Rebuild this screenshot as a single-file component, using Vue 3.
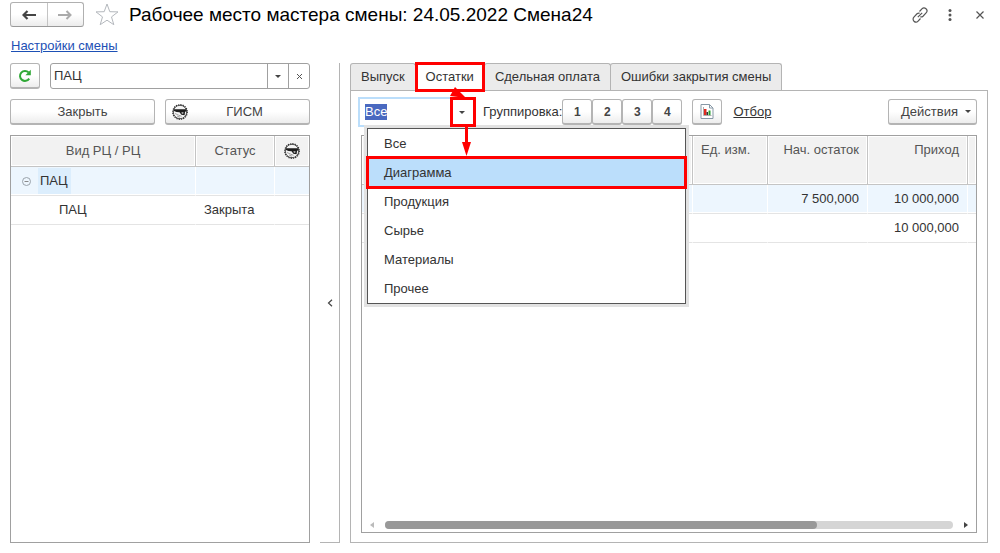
<script setup>
import { ref, onMounted } from 'vue'

const workCenter = ref('ПАЦ')
const kind = ref('Все')
const kindInput = ref(null)
const kinds = ['Все', 'Диаграмма', 'Продукция', 'Сырье', 'Материалы', 'Прочее']
const tabs = ['Выпуск', 'Остатки', 'Сдельная оплата', 'Ошибки закрытия смены']
const activeTab = ref('Остатки')
const highlighted = ref('Диаграмма')

onMounted(() => {
  kindInput.value.focus()
  kindInput.value.select()
})
</script>

<template>
  <div class="page">
    <svg class="defs" width="0" height="0" aria-hidden="true">
      <symbol id="gism" viewBox="0 0 16 16">
        <circle cx="8" cy="8" r="6.7" fill="#f4f4f4" stroke="#555" stroke-width="1" />
        <circle cx="8" cy="8" r="7.3" fill="none" stroke="#333" stroke-width="1.2" stroke-dasharray="1.3 1" />
        <path d="M1.800 5.200h12.600v1.900l-1.400.9-.4 3.200-3.200-.4-1.900-2.500-3-.3L2 6.900z" fill="#1c1c1c" />
        <path d="M9.300 8.400l2.200-.2-.3 1.500-1.300-.2z" fill="#eee" />
        <path d="M3 9.500l3.500 1.600 3 1.200M5 12l3 1.200" fill="none" stroke="#999" stroke-width=".9" />
      </symbol>
    </svg>

    <header class="titlebar">
      <div class="nav">
        <button type="button" aria-label="Назад">
          <svg width="14" height="10" viewBox="0 0 14 10"><path d="M5.500 1L1.500 5l4 4M2 5h12" fill="none" stroke="#444" stroke-width="2.200" /></svg>
        </button>
        <button type="button" aria-label="Вперед">
          <svg width="14" height="10" viewBox="0 0 14 10"><path d="M8.500 1l4 4-4 4M12 5H0" fill="none" stroke="#aaa" stroke-width="2" /></svg>
        </button>
      </div>
      <button class="plain star" type="button" aria-label="В избранное">
        <svg width="24" height="23" viewBox="0 0 24 23"><path d="M12 1l2.800 7.700 8.200.2-6.500 5 2.300 7.800-6.800-4.500-6.800 4.500 2.300-7.800L1 8.900l8.200-.2z" fill="#fff" stroke="#b4b8bd" /></svg>
      </button>
      <h1>Рабочее место мастера смены: 24.05.2022 Смена24</h1>
      <div class="tools">
        <button class="plain" type="button" aria-label="Ссылка">
          <svg width="16" height="16" viewBox="0 0 16 16" fill="none" stroke="#555" stroke-width="1.200"><path d="M7.500 4.500l2.400-2.600a2.800 2.800 0 0 1 4.200 4L11 9.200a2.800 2.800 0 0 1-2.700.6M8.500 11.500l-2.400 2.600a2.800 2.800 0 0 1-4.200-4L5 6.800a2.800 2.800 0 0 1 2.700-.6M5.800 10.200l4.400-4.400" /></svg>
        </button>
        <button class="plain" type="button" aria-label="Меню">
          <svg width="16" height="16" viewBox="0 0 16 16" fill="#555"><circle cx="8" cy="3.500" r="1.500" /><circle cx="8" cy="8" r="1.500" /><circle cx="8" cy="12.500" r="1.500" /></svg>
        </button>
        <button class="plain" type="button" aria-label="Закрыть окно">
          <svg width="16" height="16" viewBox="0 0 16 16"><path d="M4.500 4.500l7 7M11.500 4.500l-7 7" stroke="#555" stroke-width="1.200" /></svg>
        </button>
      </div>
    </header>

    <nav class="links"><a href="#settings">Настройки смены</a></nav>

    <main class="body">
      <section class="left">
        <div class="row">
          <button class="btn square" type="button" aria-label="Обновить">
            <svg width="14" height="14" viewBox="0 0 14 14"><path d="M11.200 9.600A5 5 0 1 1 10.600 3.400" fill="none" stroke="#2fa836" stroke-width="2" /><path d="M12.800 .8v5.400H7.400z" fill="#2fa836" /></svg>
          </button>
          <div class="field">
            <input v-model="workCenter" type="text" aria-label="Рабочий центр">
            <button type="button" aria-label="Выбрать"><span class="caret"></span></button>
            <button type="button" aria-label="Очистить">
              <svg width="7" height="7" viewBox="0 0 7 7"><path d="M1 1l5 5M6 1L1 6" stroke="#555" /></svg>
            </button>
          </div>
        </div>
        <div class="row">
          <button class="btn half" type="button">Закрыть</button>
          <button class="btn half" type="button">
            <svg class="gism" width="16" height="16"><use href="#gism" /></svg><span class="label">ГИСМ</span>
          </button>
        </div>
        <div class="grid">
          <table class="centers">
            <thead>
              <tr>
                <th scope="col">Вид РЦ / РЦ</th>
                <th class="status" scope="col">Статус</th>
                <th class="mark" scope="col" aria-label="ГИСМ"><svg width="16" height="16"><use href="#gism" /></svg></th>
              </tr>
            </thead>
            <tbody>
              <tr class="selected">
                <td>
                  <div class="group">
                    <svg width="9" height="9" viewBox="0 0 9 9"><circle cx="4.500" cy="4.500" r="4" fill="none" stroke="#9aa3aa" /><path d="M2.500 4.500h4" stroke="#888" /></svg>
                    <span>ПАЦ</span>
                  </div>
                </td>
                <td></td>
                <td></td>
              </tr>
              <tr>
                <td class="child">ПАЦ</td>
                <td>Закрыта</td>
                <td></td>
              </tr>
            </tbody>
          </table>
        </div>
      </section>

      <div class="splitter">
        <button class="plain" type="button" aria-label="Свернуть">
          <svg width="6" height="8" viewBox="0 0 6 8"><path d="M5 .8L1.500 4 5 7.200" fill="none" stroke="#444" stroke-width="1.200" /></svg>
        </button>
      </div>

      <section class="right">
        <div class="tabs" role="tablist">
          <button
            v-for="tab in tabs"
            :key="tab"
            type="button"
            role="tab"
            :aria-selected="tab === activeTab"
            :class="{ active: tab === activeTab }"
            @click="activeTab = tab"
          >{{ tab }}</button>
        </div>

        <div class="panel">
          <div class="toolbar">
            <div class="combo">
              <input ref="kindInput" v-model="kind" type="text" role="combobox" aria-expanded="true" aria-controls="kinds" aria-label="Вид остатков">
              <button type="button" aria-label="Открыть список"><span class="caret"></span></button>
              <ul id="kinds" class="options" role="listbox">
                <li
                  v-for="item in kinds"
                  :key="item"
                  role="option"
                  :aria-selected="item === highlighted"
                  :class="{ current: item === highlighted }"
                  @mouseenter="highlighted = item"
                >{{ item }}</li>
              </ul>
              <svg class="arrows" width="30" height="72" viewBox="0 0 30 72" fill="#f00" aria-hidden="true">
                <path d="M4 11L9 2l11 11z" />
                <path d="M19 40h3v17h3l-4.500 14L16 57h3z" />
              </svg>
            </div>
            <span class="caption">Группировка:</span>
            <div class="levels">
              <button v-for="n in 4" :key="n" class="btn" type="button">{{ n }}</button>
            </div>
            <button class="btn square chart" type="button" aria-label="Отчет">
              <svg width="14" height="15" viewBox="0 0 14 15"><path d="M1 .5h8.500l3.500 3.500v10.500H1z" fill="#fff" stroke="#8798a6" /><path d="M9.500 .5v3.500H13" fill="none" stroke="#8798a6" /><path d="M3.500 3v8.500h8" fill="none" stroke="#999" stroke-width=".8" /><path d="M4 5h2.500v6H4z" fill="#e02b20" /><path d="M6.500 8H8v3H6.500z" fill="#333" /><path d="M8.500 6.500h2V11h-2z" fill="#26a12e" /></svg>
            </button>
            <a class="filter" href="#filter">Отбор</a>
            <button class="btn actions" type="button">Действия<span class="caret"></span></button>
          </div>

          <div class="grid stock">
            <table class="stocks">
              <thead>
                <tr>
                  <th scope="col"></th>
                  <th class="unit" scope="col">Ед. изм.</th>
                  <th class="num" scope="col">Нач. остаток</th>
                  <th class="num" scope="col">Приход</th>
                  <th class="rest" scope="col"></th>
                </tr>
              </thead>
              <tbody>
                <tr class="selected">
                  <td></td>
                  <td></td>
                  <td class="num">7 500,000</td>
                  <td class="num">10 000,000</td>
                  <td></td>
                </tr>
                <tr>
                  <td></td>
                  <td></td>
                  <td></td>
                  <td class="num">10 000,000</td>
                  <td></td>
                </tr>
              </tbody>
            </table>
            <div class="scroll">
              <svg width="4" height="6" viewBox="0 0 4 6"><path d="M4 0v6L0 3z" fill="#bbb" /></svg>
              <div class="track"><div class="thumb"></div></div>
              <svg width="4" height="6" viewBox="0 0 4 6"><path d="M0 0v6l4-3z" fill="#444" /></svg>
            </div>
          </div>
        </div>
      </section>
    </main>
  </div>
</template>

<style>
body {
  background: #fff;
}
</style>

<style scoped>
* {
  box-sizing: border-box;
}
.page {
  display: flex;
  flex-direction: column;
  min-height: 100vh;
  padding: 2px 12px 10px 10px;
  font: 13px/16px "Liberation Sans", Arial, sans-serif;
  color: #333;
}
.defs {
  position: absolute;
}
button,
input {
  margin: 0;
  font: inherit;
  color: #444;
}
svg {
  display: block;
}
button {
  display: flex;
  align-items: center;
  justify-content: center;
  padding: 0;
}
.plain {
  border: 0;
  background: none;
}
.caret {
  border: 3px solid transparent;
  border-top-color: #444;
  border-bottom: 0;
}

.titlebar {
  display: flex;
  align-items: center;
  height: 25px;
}
.nav {
  display: flex;
  width: 74px;
  height: 25px;
  border: 1px solid #b0b0b0;
  border-bottom-color: #999;
  border-radius: 3px;
  background: linear-gradient(#fff 50%, #ececec);
}
.nav button {
  flex: 1;
  border: 0;
  background: none;
}
.nav button + button {
  border-left: 1px solid #c4c4c4;
}
.star {
  margin: 0 10px 0 11px;
}
h1 {
  margin: 0;
  font-size: 19px;
  line-height: 24px;
  font-weight: 400;
  color: #000;
}
.tools {
  display: flex;
  gap: 14px;
  margin-left: auto;
}

.links {
  margin: 11px 0 9px;
  padding-left: 1px;
}
.links a {
  color: #1d50b5;
}

.body {
  display: flex;
  flex: 1;
}
.left {
  display: flex;
  flex-direction: column;
  flex: 0 0 300px;
  gap: 10px;
}
.row {
  display: flex;
  gap: 10px;
}
.btn {
  height: 26px;
  border: 1px solid #b4b4b4;
  border-bottom: 2px solid #b4b4b4;
  border-radius: 3px;
  background: linear-gradient(#fff 50%, #ededed);
}
.square {
  width: 30px;
}
.half {
  flex: 1;
  position: relative;
}
.label {
  padding-left: 14px;
}
.gism {
  position: absolute;
  left: 6px;
  top: 4px;
}
.field {
  display: flex;
  flex: 1;
  height: 26px;
  border: 1px solid #a0a0a0;
  border-radius: 3px;
}
input {
  flex: 1;
  width: 0;
  min-width: 0;
  padding: 0 3px;
  border: 0;
  outline: 0;
  background: none;
  color: #333;
}
.field button {
  width: 21px;
  border: 0;
  border-left: 1px solid #a0a0a0;
  background: none;
}

.grid {
  flex: 1;
  border: 1px solid #a0a0a0;
}
table {
  width: 100%;
  table-layout: fixed;
  border-collapse: separate;
  border-spacing: 0;
}
th {
  height: 31px;
  padding: 0;
  border-right: 1px solid #c4c4c4;
  border-bottom: 1px solid #c4c4c4;
  background: #f2f2f2;
  box-shadow: inset 0 0 0 1px #fff;
  font-weight: 400;
  color: #555;
}
td {
  height: 29px;
  padding: 0 8px;
  border-right: 1px solid #fff;
  border-bottom: 1px solid #e4e4e4;
}
.selected td {
  background: #edf6fe;
  box-shadow: inset 0 -1px #fff;
}
th:last-child,
td:last-child {
  border-right: 0;
}
.status {
  width: 79px;
}
.mark {
  width: 34px;
}
.mark svg {
  margin: 0 auto;
}
.group {
  display: flex;
  align-items: center;
  gap: 7px;
  padding-left: 3px;
}
.group span {
  padding: 5px 3px 5px 2px;
  background: #dceefd;
}
.centers .child {
  padding-left: 48px;
}

.splitter {
  display: flex;
  align-items: center;
  justify-content: center;
  flex: 0 0 20px;
  margin: 0 10px;
  border-right: 1px solid #b4b4b4;
  border-bottom: 1px solid #b4b4b4;
}

.right {
  display: flex;
  flex-direction: column;
  flex: 1;
  min-width: 0;
}
.tabs {
  display: flex;
}
.tabs button {
  height: 27px;
  padding: 0 10px;
  border: 1px solid #b4b4b4;
  border-bottom: 0;
  border-radius: 3px 3px 0 0;
  background: #ebebeb;
  color: #333;
}
.tabs button + button {
  margin-left: -1px;
}
.tabs .active {
  position: relative;
  z-index: 1;
  background: #fff;
}
.tabs .active::after {
  content: "";
  position: absolute;
  inset: -2px -1px -2px -1px;
  border: 3px solid #f00;
}
.panel {
  display: flex;
  flex-direction: column;
  flex: 1;
  padding: 8px 10px 9px;
  border: 1px solid #b4b4b4;
}
.toolbar {
  display: flex;
  align-items: center;
  height: 26px;
  margin-bottom: 10px;
}
.combo {
  position: relative;
  display: flex;
  flex: 0 0 118px;
  height: 30px;
  margin-left: -3px;
  border: 2px solid #bbdefb;
}
.combo input {
  padding: 0 5px;
}
.combo input::selection {
  background: #4a69c0;
  color: #fff;
}
.combo button {
  position: relative;
  z-index: 3;
  width: 24px;
  border: 0;
  background: none;
}
.combo button::after {
  content: "";
  position: absolute;
  inset: -2px -2px -2px 0;
  border: 3px solid #f00;
}
.options {
  position: absolute;
  z-index: 2;
  top: 29px;
  left: 7px;
  width: 319px;
  margin: 0;
  padding: 0;
  list-style: none;
  border: 1px solid #555;
  background: #fff;
  box-shadow: 0 0 0 3px #e2e2e2;
}
.options li {
  position: relative;
  height: 29px;
  padding: 0 16px;
  line-height: 29px;
}
.options .current {
  background: #bbdefb;
}
.options .current::after {
  content: "";
  position: absolute;
  inset: -2px;
  border: 3px solid #f00;
}
.arrows {
  position: absolute;
  z-index: 3;
  top: -14px;
  left: 86px;
}
.caption {
  margin-left: 7px;
}
.levels {
  display: flex;
}
.levels .btn {
  width: 30px;
  font-size: 12px;
  font-weight: 700;
}
.chart {
  margin: 0 11px 0 10px;
}
.filter {
  color: #333;
}
.actions {
  gap: 7px;
  margin-left: auto;
  padding: 0 5px 0 12px;
}
.stock {
  display: flex;
  flex-direction: column;
  justify-content: space-between;
}
.stocks th {
  height: 49px;
  padding: 6px 8px;
  vertical-align: top;
}
.stocks .num {
  width: 100px;
  text-align: right;
}
.stocks th.unit {
  width: 75px;
  text-align: left;
}
.stocks th.rest {
  width: 8px;
  padding: 0;
}
.scroll {
  display: flex;
  align-items: center;
  gap: 11px;
  padding: 0 8px 3px;
}
.track {
  flex: 1;
  height: 8px;
  border-radius: 4px;
  background: #d5d5d5;
}
.thumb {
  width: 76%;
  height: 8px;
  border-radius: 4px;
  background: #999;
}
</style>
